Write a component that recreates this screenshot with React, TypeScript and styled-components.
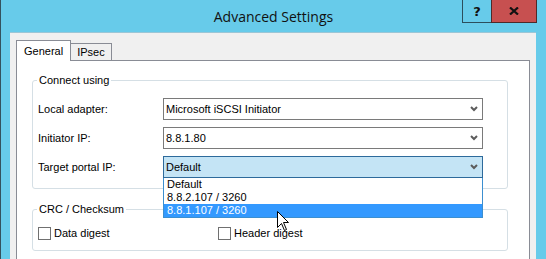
import React from "react";
import styled, { createGlobalStyle } from "styled-components";

const colors = {
    frame: "#67cbea",
    frameEdge: "#34525e",
    client: "#f0f0f0",
    tabBorder: "#898c95",
    groupBorder: "#d5dfe5",
    comboBorder: "#7a7a7a",
    focusBorder: "#2d6a9b",
    focusFill: "#c4e4f5",
    listBorder: "#3c8fd0",
    highlight: "#3399ff",
    close: "#c75050",
};

const GlobalStyle = createGlobalStyle`
    * { box-sizing: border-box; }
    body {
        margin: 0;
        font-family: "Liberation Sans", Arial, sans-serif;
        font-size: 11px;
        color: #000;
    }
`;

const Window = styled.div`
    position: relative;
    width: 546px;
    height: 259px;
    overflow: hidden;
    display: flex;
    flex-direction: column;
    background: ${colors.frame};
    border-left: 1px solid ${colors.frameEdge};
`;

const TitleBar = styled.div`
    height: 32px;
    flex: none;
    display: grid;
    grid-template-columns: 1fr auto 1fr;
    align-items: start;
`;

const Title = styled.div`
    grid-column: 2;
    font-family: "Open Sans", "Noto Sans", sans-serif;
    font-size: 14px;
    line-height: 32px;
    padding-top: 1px;
    color: #111;
`;

const Caption = styled.div`
    grid-column: 3;
    justify-self: end;
    display: flex;
    margin-right: 9px;
`;

const CaptionButton = styled.div<{ $close?: boolean }>`
    width: ${(p) => (p.$close ? "46px" : "30px")};
    height: 23px;
    display: flex;
    align-items: center;
    justify-content: center;
    background: ${(p) => (p.$close ? colors.close : "transparent")};
    border: 1px solid ${(p) => (p.$close ? "#4e2a2a" : "#2c4e5c")};
    border-top: none;
    margin-left: ${(p) => (p.$close ? "-1px" : "0")};
    font-family: "DejaVu Sans", sans-serif;
    font-weight: bold;
    font-size: 13px;
    color: #111;
`;

const Client = styled.div`
    flex: 1;
    margin: 0 10px 0 9px;
    background: ${colors.client};
    border-top: 1px solid #9cc6d6;
    padding: 7px 6px 0 6px;
    display: flex;
    flex-direction: column;
`;

const TabStrip = styled.div`
    display: flex;
    align-items: flex-start;
    height: 21px;
    margin-bottom: -1px;
    position: relative;
    z-index: 1;
`;

const Tab = styled.div<{ $active?: boolean }>`
    height: ${(p) => (p.$active ? "21px" : "17px")};
    margin-top: ${(p) => (p.$active ? "0" : "3px")};
    padding: 0 ${(p) => (p.$active ? "7px" : "6px")};
    display: flex;
    align-items: center;
    background: ${(p) => (p.$active ? "#fff" : colors.client)};
    border: 1px solid ${colors.tabBorder};
    border-bottom: none;
    border-left: ${(p) => (p.$active ? `1px solid ${colors.tabBorder}` : "none")};
`;

const Panel = styled.div`
    height: 230px;
    flex: none;
    background: #fff;
    border: 1px solid ${colors.tabBorder};
    padding: 13px 21px 0 15px;
`;

const Group = styled.fieldset<{ $gap?: number }>`
    margin: ${(p) => p.$gap ?? 0}px 0 0 0;
    min-width: 0;
    border: 1px solid ${colors.groupBorder};
    border-radius: 3px;
    padding: 11px 24px 10px 5px;
`;

const GroupTitle = styled.legend`
    padding: 0 2px;
    margin-left: -1px;
    line-height: 13px;
`;

const FormGrid = styled.div`
    display: grid;
    grid-template-columns: 125px 320px;
    row-gap: 7px;
    align-items: center;
`;

const Label = styled.div`
    line-height: 13px;
`;

const Combo = styled.div<{ $open?: boolean }>`
    position: relative;
    height: 22px;
    display: flex;
    align-items: center;
    justify-content: space-between;
    padding: 0 4px 0 2px;
    background: ${(p) => (p.$open ? colors.focusFill : "#fff")};
    border: 1px solid ${(p) => (p.$open ? colors.focusBorder : colors.comboBorder)};
`;

const DropList = styled.div`
    position: absolute;
    left: -1px;
    right: -1px;
    top: 21px;
    background: #fff;
    border: 1px solid ${colors.listBorder};
    border-top: none;
    z-index: 2;
`;

const Option = styled.div<{ $selected?: boolean }>`
    height: 13px;
    line-height: 13px;
    padding-left: 3px;
    background: ${(p) => (p.$selected ? colors.highlight : "transparent")};
    color: ${(p) => (p.$selected ? "#fff" : "#000")};
`;

const CheckRow = styled.div`
    display: grid;
    grid-template-columns: 180px auto;
`;

const Check = styled.label`
    display: flex;
    align-items: center;
    gap: 3px;
    line-height: 13px;
`;

const Box = styled.span`
    width: 13px;
    height: 13px;
    border: 1px solid #707070;
    background: #fff;
`;

const Cursor = styled.svg`
    position: absolute;
    left: 276px;
    top: 211px;
    z-index: 5;
`;

function Chevron() {
    return (
        <svg width="8" height="6" viewBox="0 0 8 6">
            <path d="M1 1 L4 4 L7 1" fill="none" stroke="#5c5c5c" strokeWidth="2" />
        </svg>
    );
}

function CloseGlyph() {
    return (
        <svg width="10" height="8" viewBox="0 0 10 8">
            <path d="M1 0.5 L9 7.5 M9 0.5 L1 7.5" fill="none" stroke="#111" strokeWidth="2.2" />
        </svg>
    );
}

const options = ["Default", "8.8.2.107 / 3260", "8.8.1.107 / 3260"];

export default function App() {
    return (
        <Window>
            <GlobalStyle />
            <TitleBar>
                <Title>Advanced Settings</Title>
                <Caption>
                    <CaptionButton>?</CaptionButton>
                    <CaptionButton $close><CloseGlyph /></CaptionButton>
                </Caption>
            </TitleBar>
            <Client>
                <TabStrip>
                    <Tab $active>General</Tab>
                    <Tab>IPsec</Tab>
                </TabStrip>
                <Panel>
                    <Group>
                        <GroupTitle>Connect using</GroupTitle>
                        <FormGrid>
                            <Label>Local adapter:</Label>
                            <Combo>
                                <span>Microsoft iSCSI Initiator</span>
                                <Chevron />
                            </Combo>
                            <Label>Initiator IP:</Label>
                            <Combo>
                                <span>8.8.1.80</span>
                                <Chevron />
                            </Combo>
                            <Label>Target portal IP:</Label>
                            <Combo $open>
                                <span>Default</span>
                                <Chevron />
                                <DropList>
                                    {options.map((o, i) => (
                                        <Option key={o} $selected={i === 2}>{o}</Option>
                                    ))}
                                </DropList>
                            </Combo>
                        </FormGrid>
                    </Group>
                    <Group $gap={14}>
                        <GroupTitle>CRC / Checksum</GroupTitle>
                        <CheckRow>
                            <Check><Box />Data digest</Check>
                            <Check><Box />Header digest</Check>
                        </CheckRow>
                    </Group>
                </Panel>
            </Client>
            <Cursor width="13" height="21" viewBox="0 0 13 21">
                <path d="M0.5 0.5 L0.5 16.5 L4.5 12.5 L7.5 19.5 L9.5 18.5 L6.5 11.5 L11.5 11.5 Z" fill="#fff" stroke="#000" strokeWidth="1" />
            </Cursor>
        </Window>
    );
}
